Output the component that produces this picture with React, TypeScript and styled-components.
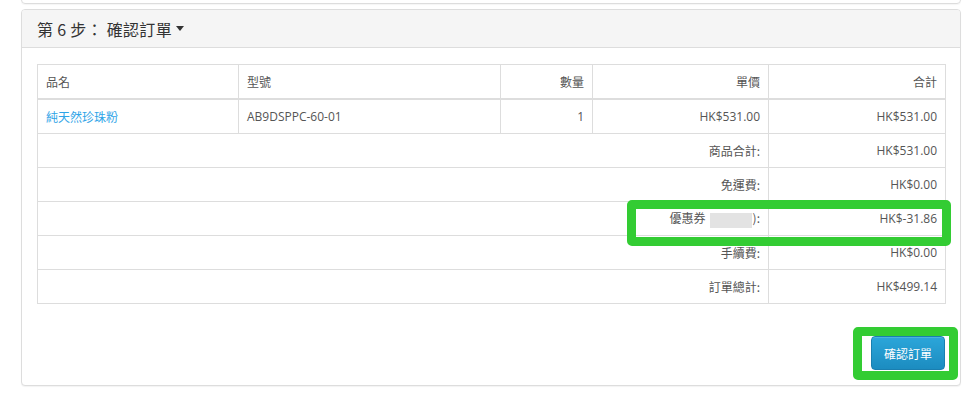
import React from 'react';
import styled, { createGlobalStyle } from 'styled-components';

const GlobalStyle = createGlobalStyle`
  html, body { margin: 0; padding: 0; background: #fff; }
  body {
    font-family: "Open Sans", "Noto Sans CJK TC", sans-serif;
    font-size: 12px;
    color: #555;
  }
`;

/* ── Page ── */
const Page = styled.div`
  position: relative;
  width: 972px;
  height: 403px;
  overflow: hidden;
  padding: 0 11px 0 21px;
  box-sizing: border-box;
`;

/* bottom edge of the previous step's panel */
const PrevPanel = styled.div`
  height: 30px;
  margin-top: -28px;
  border: 1px solid #ddd;
  border-radius: 0 0 4px 4px;
  box-shadow: 0 1px 1px rgba(0,0,0,0.04);
`;

const Panel = styled.div`
  margin-top: 5px;
  border: 1px solid #ddd;
  border-radius: 4px;
  background: #fff;
  box-shadow: 0 1px 1px rgba(0,0,0,0.05);
`;

const PanelHeading = styled.div`
  height: 38px;
  box-sizing: border-box;
  padding: 0 15px;
  display: flex;
  align-items: center;
  background: #f5f5f5;
  border-bottom: 1px solid #ddd;
  border-radius: 3px 3px 0 0;
`;

const Title = styled.h3`
  margin: 0;
  font-size: 16px;
  font-weight: 400;
  letter-spacing: 0.3px;
  color: #333;
  display: flex;
  align-items: center;
  font-family: "Noto Sans CJK TC", "Open Sans", sans-serif;
`;

const Caret = styled.span`
  display: inline-block;
  width: 0;
  height: 0;
  margin-left: 4px;
  border-top: 5px solid #333;
  border-left: 4px solid transparent;
  border-right: 4px solid transparent;
`;

const PanelBody = styled.div`
  padding: 16px 15px 15px;
  display: flex;
  flex-direction: column;
`;

/* ── Table ── */
const Table = styled.table`
  width: 908px;
  border-collapse: collapse;
  table-layout: fixed;
  border: 1px solid #ddd;
`;

const Th = styled.th<{ $right?: boolean }>`
  height: 33px;
  padding: 0 8px;
  font-weight: 400;
  color: #555;
  text-align: ${({ $right }) => ($right ? 'right' : 'left')};
  border: 1px solid #ddd;
  border-bottom: 2px solid #ddd;
  font-family: "Noto Sans CJK TC", sans-serif;
`;

const Td = styled.td<{ $right?: boolean }>`
  height: 33px;
  padding: 0 8px;
  text-align: ${({ $right }) => ($right ? 'right' : 'left')};
  border: 1px solid #ddd;
  white-space: nowrap;
  color: #555;
`;

const Label = styled.span`
  font-family: "Noto Sans CJK TC", sans-serif;
`;

const ProductLink = styled.a`
  color: #2fa4e7;
  text-decoration: none;
  font-family: "Noto Sans CJK TC", sans-serif;
`;

const Redacted = styled.span`
  display: inline-block;
  vertical-align: middle;
  width: 42px;
  height: 15px;
  margin: 0 1px 0 4px;
  background: #e3e3e3;
`;

/* ── Footer ── */
const Actions = styled.div`
  display: flex;
  justify-content: flex-end;
  margin-top: 32px;
`;

const ConfirmButton = styled.button`
  height: 34px;
  padding: 0 12px;
  border: 1px solid #1a7fb0;
  border-radius: 4px;
  background: linear-gradient(to bottom, #2ba6da, #1c8cc0);
  color: #fff;
  font-size: 12px;
  font-family: "Noto Sans CJK TC", sans-serif;
  cursor: pointer;
  box-shadow: inset 0 1px 0 rgba(255,255,255,0.15);
`;

/* annotation frames drawn over the screenshot */
const Highlight = styled.div`
  position: absolute;
  border: 9px solid #33cc33;
  border-radius: 5px;
  box-sizing: border-box;
  pointer-events: none;
`;

const rows = [
  { label: '商品合計:', value: 'HK$531.00' },
  { label: '免運費:', value: 'HK$0.00' },
  { label: 'coupon', value: 'HK$-31.86' },
  { label: '手續費:', value: 'HK$0.00' },
  { label: '訂單總計:', value: 'HK$499.14' },
];

export default function App() {
  return (
    <Page>
      <GlobalStyle />
      <PrevPanel />
      <Panel>
        <PanelHeading>
          <Title>第 6 步： 確認訂單<Caret /></Title>
        </PanelHeading>
        <PanelBody>
          <Table>
            <colgroup>
              <col style={{ width: 201 }} />
              <col style={{ width: 262 }} />
              <col style={{ width: 92 }} />
              <col style={{ width: 176 }} />
              <col style={{ width: 177 }} />
            </colgroup>
            <thead>
              <tr>
                <Th>品名</Th>
                <Th>型號</Th>
                <Th $right>數量</Th>
                <Th $right>單價</Th>
                <Th $right>合計</Th>
              </tr>
            </thead>
            <tbody>
              <tr>
                <Td><ProductLink href="#">純天然珍珠粉</ProductLink></Td>
                <Td>AB9DSPPC-60-01</Td>
                <Td $right>1</Td>
                <Td $right>HK$531.00</Td>
                <Td $right>HK$531.00</Td>
              </tr>
              {rows.map((r) => (
                <tr key={r.value + r.label}>
                  <Td $right colSpan={4}>
                    {r.label === 'coupon' ? (
                      <Label>優惠券<Redacted />):</Label>
                    ) : (
                      <Label>{r.label}</Label>
                    )}
                  </Td>
                  <Td $right>{r.value}</Td>
                </tr>
              ))}
            </tbody>
          </Table>
          <Actions>
            <ConfirmButton>確認訂單</ConfirmButton>
          </Actions>
        </PanelBody>
      </Panel>

      <Highlight style={{ left: 627, top: 200, width: 324, height: 46 }} />
      <Highlight style={{ left: 853, top: 327, width: 105, height: 53 }} />
    </Page>
  );
}
